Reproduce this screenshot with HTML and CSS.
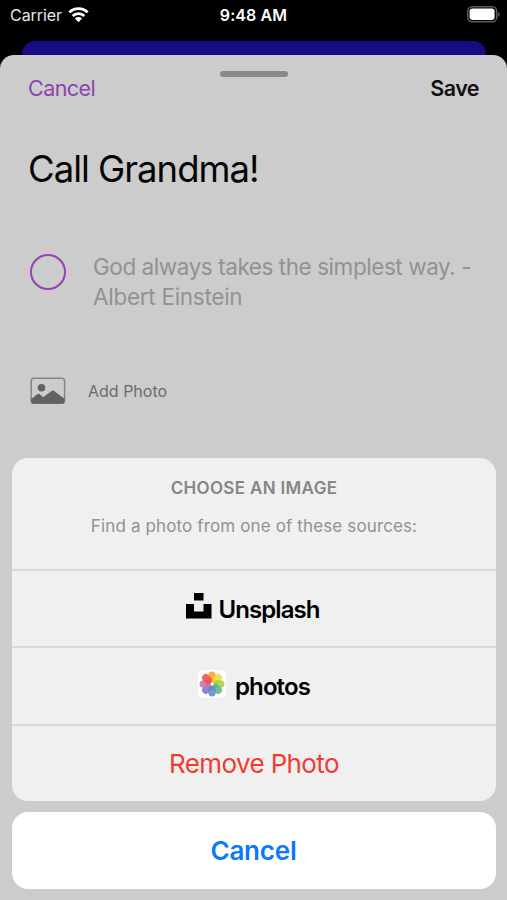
FILE: index.html
```html
<!DOCTYPE html>
<html lang="en">
<head>
<meta charset="utf-8">
<title>Edit Task</title>
<link rel="stylesheet" href="styles.css">
</head>
<body>
<div class="phone">
  <header class="status">
    <div class="carrier"><span>Carrier</span>
      <svg class="wifi" width="21" height="16" viewBox="0 0 21 16" fill="none" stroke="#fff" stroke-width="2.7"><path d="M1.3 5.4a13.2 13.2 0 0 1 18.4 0"/><path d="M4.7 9a8.3 8.3 0 0 1 11.6 0"/><path d="M10.5 15.2 6.9 11.6a5.1 5.1 0 0 1 7.2 0z" fill="#fff" stroke="none"/></svg>
    </div>
    <span class="time">9:48 AM</span>
    <svg class="battery" width="33" height="17" viewBox="0 0 33 17"><rect x=".75" y=".75" width="29" height="15" rx="4.5" fill="none" stroke="#5c5c5c" stroke-width="1.5"/><rect x="2.6" y="2.6" width="25" height="11.3" rx="2.8" fill="#fff"/><path d="M31.2 6a2.6 2.6 0 0 1 0 4.8z" fill="#5c5c5c"/></svg>
  </header>
  <div class="behind"></div>
  <main class="sheet">
    <div class="grabber"></div>
    <nav class="nav"><span class="nav-cancel">Cancel</span><span class="nav-save">Save</span></nav>
    <h1 class="title">Call Grandma!</h1>
    <div class="task"><span class="circle"></span><p class="quote">God always takes the simplest way. -<br><span class="author">Albert Einstein</span></p></div>
    <div class="photo-row">
      <svg width="36" height="28" viewBox="0 0 36 28"><rect x="1.2" y="1.2" width="33.4" height="25" rx="3" fill="none" stroke="#858585" stroke-width="1.5"/><circle cx="11.5" cy="10.8" r="3.8" fill="#616161"/><path d="M1 22.2 7.2 17.2Q8.5 16.2 9.8 17.2L13 20.3 21.7 13.9Q23 13.1 24.2 13.9L34.8 22v2.3q0 2.5-3 2.5H4q-3 0-3-2.5z" fill="#616161"/></svg>
      <span>Add Photo</span>
    </div>
  </main>
  <section class="actions">
    <div class="menu">
      <div class="intro"><h2>CHOOSE AN IMAGE</h2><p>Find a photo from one of these sources:</p></div>
      <div class="item unsplash">
        <svg width="26" height="26" viewBox="0 0 26 26"><path d="M8 0h9.5v7.5H8zM0 11h8v7.5h9.5V11h8v14.5H0z"/></svg>
        <span>Unsplash</span>
      </div>
      <div class="item photos">
        <svg width="28" height="28" viewBox="-14 -14 28 28"><rect x="-14" y="-14" width="28" height="28" rx="6" fill="#fff"/>
          <g class="petals">
            <rect x="-3.7" y="-12.5" width="7.4" height="11.3" rx="3.7" fill="#f9a030"/>
            <rect x="-3.7" y="-12.5" width="7.4" height="11.3" rx="3.7" fill="#efdc2f" transform="rotate(45)"/>
            <rect x="-3.7" y="-12.5" width="7.4" height="11.3" rx="3.7" fill="#a9cf50" transform="rotate(90)"/>
            <rect x="-3.7" y="-12.5" width="7.4" height="11.3" rx="3.7" fill="#5fb583" transform="rotate(135)"/>
            <rect x="-3.7" y="-12.5" width="7.4" height="11.3" rx="3.7" fill="#5b8fd0" transform="rotate(180)"/>
            <rect x="-3.7" y="-12.5" width="7.4" height="11.3" rx="3.7" fill="#8078c0" transform="rotate(225)"/>
            <rect x="-3.7" y="-12.5" width="7.4" height="11.3" rx="3.7" fill="#bd78ae" transform="rotate(270)"/>
            <rect x="-3.7" y="-12.5" width="7.4" height="11.3" rx="3.7" fill="#f04d50" transform="rotate(315)"/>
          </g><circle r="1.5" fill="#fff"/>
        </svg>
        <span>photos</span>
      </div>
      <div class="item remove"><span>Remove Photo</span></div>
    </div>
    <div class="dismiss"><span>Cancel</span></div>
  </section>
</div>
</body>
</html>
```
FILE: styles.css
```css
* { box-sizing: border-box; margin: 0; padding: 0; }
body { background: #000; font-family: Inter, "Liberation Sans", sans-serif; }
svg { display: block; flex: none; }
span, h1, h2, p { white-space: nowrap; }
.phone { width: 507px; height: 900px; overflow: hidden; position: relative; background: #000; }
.status { height: 41px; padding: 6px 7px 0 10px; display: grid; grid-template-columns: 1fr auto 1fr; align-items: start; color: #fff; font-size: 16px; line-height: 18px; }
.carrier { display: flex; gap: 6px; color: #e8e8e8; letter-spacing: -.05px; }
.wifi { margin-top: 1px; }
.time { font-weight: 600; letter-spacing: .1px; margin-right: 3px; }
.battery { justify-self: end; }
.behind { height: 14px; margin: 0 21px 0 22px; border-radius: 13px 13px 0 0; background: #180b83; }
.sheet { height: 845px; padding: 16px 28px 0; border-radius: 14px 14px 0 0; background: #ccc; }
.grabber { width: 68px; height: 6px; margin: 0 auto; border-radius: 3px; background: #8a8a8a; }
.nav { display: flex; justify-content: space-between; height: 26px; line-height: 23px; font-size: 21.5px; letter-spacing: -.55px; }
.nav-cancel { color: #8e44ad; }
.nav-save { font-weight: 600; color: #111; }
.title { height: 76px; margin-top: 34px; line-height: 65px; font-size: 36.5px; font-weight: 400; letter-spacing: -1px; color: #050505; border-bottom: 1px solid #c9c9c9; }
.task { display: flex; gap: 27px; margin-top: 39px; padding-left: 2px; }
.circle { flex: none; width: 36px; height: 36px; margin-top: 2px; border: 2px solid #8e44ad; border-radius: 50%; }
.quote { font-size: 22.5px; line-height: 29.5px; letter-spacing: -.44px; color: #929292; }
.author { letter-spacing: -.28px; }
.photo-row { display: flex; align-items: center; gap: 22px; height: 28px; margin: 66px 0 0 2px; font-size: 16px; color: #6b6b6b; }
.actions { position: absolute; left: 12px; right: 11px; top: 458px; display: grid; gap: 11px; }
.menu { height: 343px; border-radius: 16px; background: #f0f0f0; overflow: hidden; display: grid; grid-template-rows: 110.5px 77.5px 77.5px 77.5px; }
.intro { text-align: center; padding-top: 19px; color: #858585; }
.intro h2 { font-size: 17px; line-height: 22px; font-weight: 600; letter-spacing: .34px; }
.intro p { margin-top: 16px; font-size: 17px; line-height: 22px; letter-spacing: .13px; color: #929292; }
.item { display: flex; align-items: center; justify-content: center; border-top: 2px solid #d7d9d9; }
.unsplash { gap: 6px; padding-right: 2px; font-size: 24px; font-weight: 600; letter-spacing: -.9px; }
.unsplash svg { margin-top: -5px; }
.unsplash span { margin-top: 2px; }
.photos { gap: 9px; font-size: 24px; font-weight: 600; letter-spacing: -.9px; }
.photos svg { margin-top: -3px; }
.photos span { margin-top: 1px; }
.petals rect { opacity: .88; }
.remove { font-size: 26px; letter-spacing: -.62px; color: #f23b30; }
.dismiss { height: 77px; border-radius: 16px; background: #fff; display: flex; align-items: center; justify-content: center; font-size: 26px; font-weight: 600; letter-spacing: -.2px; color: #0a78ff; }
.dismiss span { margin-right: 1px; }
```
